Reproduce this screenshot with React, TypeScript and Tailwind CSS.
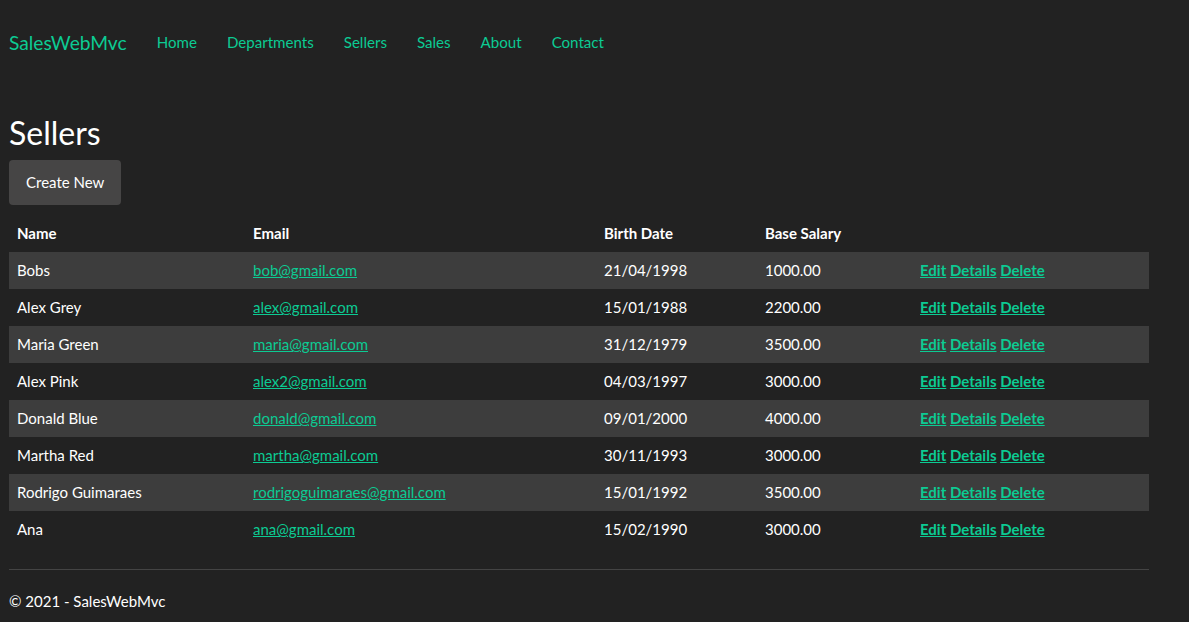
const sellers = [
  { name: 'Bobs', email: 'bob@gmail.com', birth: '21/04/1998', salary: '1000.00' },
  { name: 'Alex Grey', email: 'alex@gmail.com', birth: '15/01/1988', salary: '2200.00' },
  { name: 'Maria Green', email: 'maria@gmail.com', birth: '31/12/1979', salary: '3500.00' },
  { name: 'Alex Pink', email: 'alex2@gmail.com', birth: '04/03/1997', salary: '3000.00' },
  { name: 'Donald Blue', email: 'donald@gmail.com', birth: '09/01/2000', salary: '4000.00' },
  { name: 'Martha Red', email: 'martha@gmail.com', birth: '30/11/1993', salary: '3000.00' },
  { name: 'Rodrigo Guimaraes', email: 'rodrigoguimaraes@gmail.com', birth: '15/01/1992', salary: '3500.00' },
  { name: 'Ana', email: 'ana@gmail.com', birth: '15/02/1990', salary: '3000.00' },
];

const navLinks = ['Home', 'Departments', 'Sellers', 'Sales', 'About', 'Contact'];

export default function App() {
  return (
    <div className="min-h-[622px] pt-[12px] bg-[#222222] text-white text-[15px] leading-[21px] font-['Lato','Liberation_Sans',sans-serif]">
      {/* navbar */}
      <nav className="flex items-center h-[60px] pl-[9px]">
        <a className="text-[19.2px] text-[#0ccb93] pr-[15px]">SalesWebMvc</a>
        {navLinks.map((l) => (
          <a key={l} className="px-[15px] text-[15.1px] text-[#0ccb93]">
            {l}
          </a>
        ))}
      </nav>

      <main className="w-[1140px] ml-[9px]">
        <h2 className="text-[32px] leading-[40px] mt-[41px] mb-[7px]">Sellers</h2>
        <button className="h-[45px] px-[17px] bg-[#464545] rounded-[4px] text-white">Create New</button>

        <table className="w-full mt-[10px] border-collapse">
          <thead>
            <tr className="h-[37px] text-left font-bold">
              <th className="w-[236px] px-2">Name</th>
              <th className="w-[351px] px-2">Email</th>
              <th className="w-[161px] px-2">Birth Date</th>
              <th className="w-[155px] px-2">Base Salary</th>
              <th className="px-2"></th>
            </tr>
          </thead>
          <tbody>
            {sellers.map((s, i) => (
              <tr key={s.email} className={i % 2 === 0 ? 'h-[37px] bg-[#3d3d3d]' : 'h-[37px]'}>
                <td className="px-2">{s.name}</td>
                <td className="px-2">
                  <a className="text-[#0ccb93] underline">{s.email}</a>
                </td>
                <td className="px-2">{s.birth}</td>
                <td className="px-2">{s.salary}</td>
                <td className="px-2 font-bold text-[#0ccb93]">
                  <a className="underline">Edit</a> <a className="underline">Details</a>{' '}
                  <a className="underline">Delete</a>
                </td>
              </tr>
            ))}
          </tbody>
        </table>

        <footer className="mt-[21px] border-t border-[#444444] pt-[21px] pb-[10px]">
          <p>© 2021 - SalesWebMvc</p>
        </footer>
      </main>
    </div>
  );
}
